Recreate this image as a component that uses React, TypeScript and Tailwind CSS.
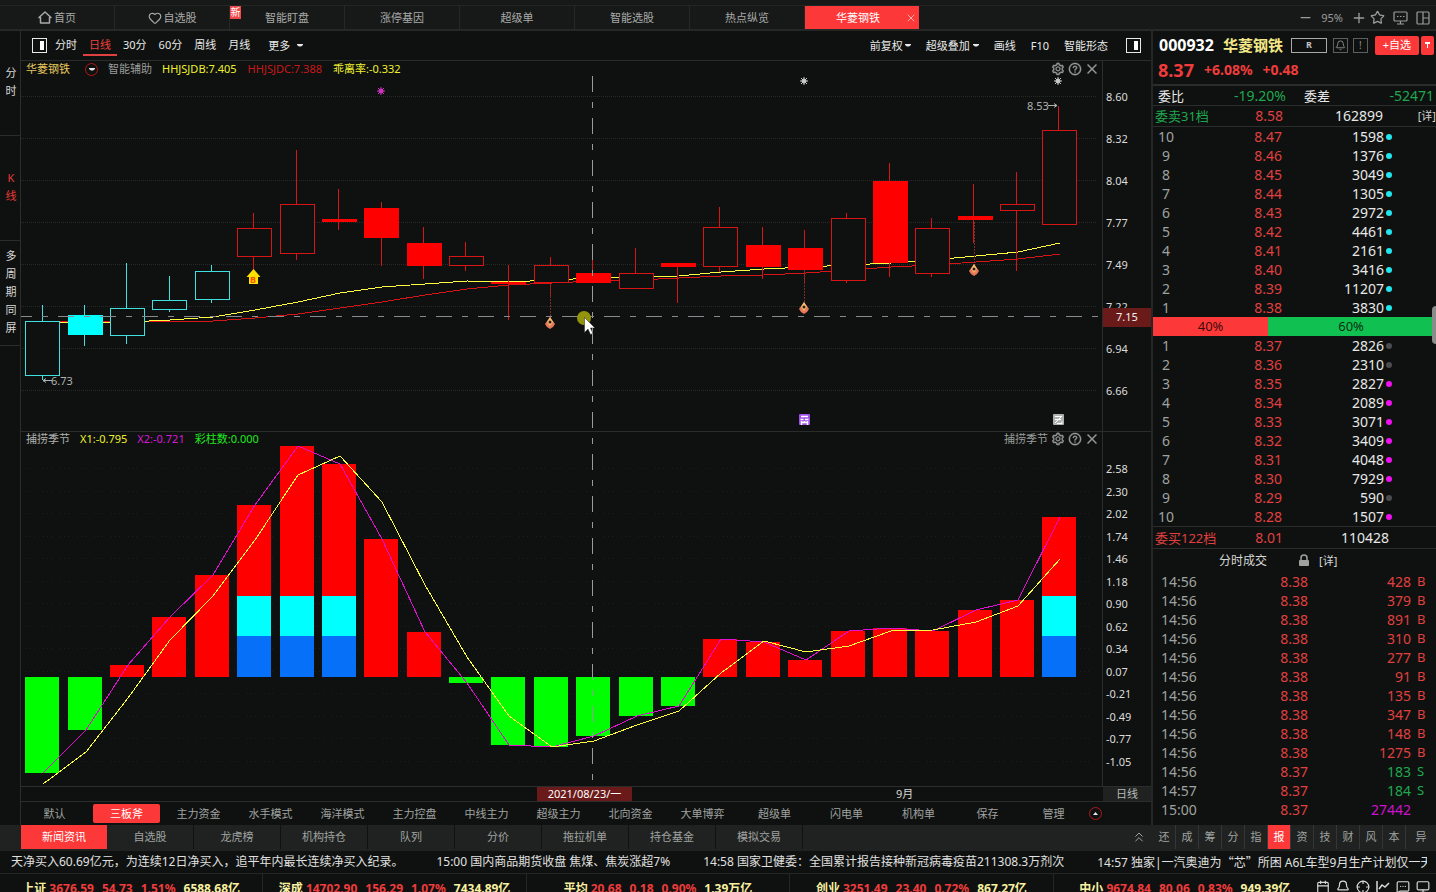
import { AiOutlineSetting, AiOutlineQuestionCircle, AiOutlineClose } from 'react-icons/ai';
import { Heart, Star, Minus, Plus, Bell, X, ChevronsUp, Calendar, Crosshair, MessageSquareMore, Monitor } from 'lucide-react';

const topTabs = ['首页', '自选股', '智能盯盘', '涨停基因', '超级单', '智能选股', '热点纵览'];
const periods = ['分时', '日线', '30分', '60分', '周线', '月线'];
const sideTabs = [
  { chars: ['分', '时'], style: 'pt-[33px] text-[#d8d8d8]' },
  { chars: ['K', '线'], style: 'pt-[33px] text-[#e83838]' },
  { chars: ['多', '周', '期', '同', '屏'], style: 'pt-[6px] text-[#d8d8d8]' },
];
const templates = ['默认', '三板斧', '主力资金', '水手模式', '海洋模式', '主力控盘', '中线主力', '超级主力', '北向资金', '大单博弈', '超级单', '闪电单', '机构单'];
const infoTabs = ['新闻资讯', '自选股', '龙虎榜', '机构持仓', '队列', '分价', '拖拉机单', '持仓基金', '模拟交易'];
const panelTabs = ['还', '成', '筹', '分', '指', '报', '资', '技', '财', '风', '本'];

const asks = [
  ['10', '8.47', '1598'], ['9', '8.46', '1376'], ['8', '8.45', '3049'], ['7', '8.44', '1305'], ['6', '8.43', '2972'],
  ['5', '8.42', '4461'], ['4', '8.41', '2161'], ['3', '8.40', '3416'], ['2', '8.39', '11207'], ['1', '8.38', '3830'],
].map(([level, price, volume]) => ({ level, price, volume, dot: 'bg-[#22e6ee]' }));

const PINK = 'bg-[#f010f0]';
const GREY = 'bg-[#4a4c50]';
const bids = [
  { level: '1', price: '8.37', volume: '2826', dot: GREY },
  { level: '2', price: '8.36', volume: '2310', dot: GREY },
  { level: '3', price: '8.35', volume: '2827', dot: PINK },
  { level: '4', price: '8.34', volume: '2089', dot: PINK },
  { level: '5', price: '8.33', volume: '3071', dot: PINK },
  { level: '6', price: '8.32', volume: '3409', dot: PINK },
  { level: '7', price: '8.31', volume: '4048', dot: PINK },
  { level: '8', price: '8.30', volume: '7929', dot: PINK },
  { level: '9', price: '8.29', volume: '590', dot: GREY },
  { level: '10', price: '8.28', volume: '1507', dot: PINK },
];

const trades = [
  ['14:56', '8.38', '428', 'B'], ['14:56', '8.38', '379', 'B'], ['14:56', '8.38', '891', 'B'], ['14:56', '8.38', '310', 'B'],
  ['14:56', '8.38', '277', 'B'], ['14:56', '8.38', '91', 'B'], ['14:56', '8.38', '135', 'B'], ['14:56', '8.38', '347', 'B'],
  ['14:56', '8.38', '148', 'B'], ['14:56', '8.38', '1275', 'B'], ['14:56', '8.37', '183', 'S'], ['14:57', '8.37', '184', 'S'],
  ['15:00', '8.37', '27442', ''],
];

const indices = [
  ['上证', '3676.59', '54.73', '1.51%', '6588.68亿'],
  ['深成', '14702.90', '156.29', '1.07%', '7434.89亿'],
  ['平均', '20.68', '0.18', '0.90%', '1.39万亿'],
  ['创业', '3251.49', '23.40', '0.72%', '867.27亿'],
  ['中小', '9674.84', '80.06', '0.83%', '949.39亿'],
];

// high, body top, body bottom, low, style (c = cyan hollow, C = cyan solid, r = red hollow, R = red solid)
const candles: [number, number, number, number, string][] = [
  [305, 321, 375, 380, 'c'], [305, 315, 335, 346, 'C'], [263, 308, 335, 344, 'c'], [276, 300, 309, 312, 'c'], [265, 271, 299, 303, 'c'],
  [213, 228, 256, 270, 'r'], [150, 204, 253, 260, 'r'], [189, 219, 222, 230, 'R'], [202, 208, 238, 266, 'R'], [227, 243, 266, 279, 'R'],
  [242, 256, 265, 271, 'r'], [265, 282, 284, 320, 'R'], [257, 265, 282, 297, 'r'], [260, 273, 283, 283, 'R'], [248, 273, 288, 288, 'r'],
  [263, 263, 267, 303, 'R'], [207, 227, 266, 272, 'r'], [227, 245, 267, 279, 'R'], [230, 248, 270, 282, 'R'], [213, 218, 280, 283, 'r'],
  [163, 181, 263, 277, 'R'], [218, 228, 273, 277, 'r'], [184, 216, 220, 243, 'R'], [172, 204, 210, 271, 'r'], [106, 130, 224, 224, 'r'],
];
const fastMa = [322, 322, 322, 320, 317, 310, 302, 293, 287, 284, 281, 282, 280, 278, 277, 276, 272, 269, 267, 265, 263, 260, 256, 252, 243];
const slowMa = [321, 321, 321, 321, 321, 318, 314, 308, 302, 295, 289, 285, 283, 281, 280, 278, 276, 275, 273, 270, 267, 265, 262, 259, 254];
const bars = [773, 730, 665, 617, 575, 505, 446, 464, 539, 632, 683, 745, 747, 736, 716, 706, 639, 642, 660, 631, 628, 631, 610, 600, 517];
const x1 = [784, 752, 698, 640, 596, 540, 475, 456, 502, 585, 657, 716, 747, 741, 725, 711, 673, 641, 652, 646, 631, 630, 622, 606, 559];
const ZERO = 677;

const priceTicks: [string, number][] = [['8.60', 97], ['8.32', 139], ['8.04', 181], ['7.77', 223], ['7.49', 265], ['7.22', 307], ['6.94', 349], ['6.66', 391]];
const seasonTicks: [string, number][] = [
  ['2.58', 469], ['2.30', 492], ['2.02', 514], ['1.74', 537], ['1.46', 559], ['1.18', 582], ['0.90', 604],
  ['0.62', 627], ['0.34', 649], ['0.07', 672], ['-0.21', 694], ['-0.49', 717], ['-0.77', 739], ['-1.05', 762],
];

const wickX = (i: number) => Math.floor(42.2 + 42.35 * i);
const bodyX = (i: number) => Math.round(25.3 + 42.38 * i);
const toPoints = (ys: number[]) => ys.map((y, i) => `${bodyX(i) + 18},${y}`).join(' ');

function Caret() {
  return <svg width="6" height="3" viewBox="0 0 6 3" fill="currentColor"><path d="M0 0h6v1L4 2.500h-2L0 1z" /></svg>;
}

function SplitIcon() {
  return (
    <svg width="15" height="15" viewBox="0 0 15 15" fill="none">
      <rect x=".5" y=".5" width="14" height="14" stroke="#e8e8e8" />
      <rect x="8" y="3" width="4" height="9" fill="#fff" />
    </svg>
  );
}

function Sun({ x, y, color }: { x: number; y: number; color: string }) {
  return (
    <g stroke={color} strokeWidth="1">
      <circle cx={x} cy={y} r="2" fill={color} />
      <path d={`M${x} ${y - 4}v8M${x - 4} ${y}h8M${x - 3} ${y - 3}l6 6M${x + 3} ${y - 3}l-6 6`} />
    </g>
  );
}

function Flame({ x, y, from }: { x: number; y: number; from: number }) {
  return (
    <g>
      <path d={`M${x + 0.5} ${from}V${y - 5}`} stroke="#7a2c28" strokeDasharray="2 1" />
      <path d={`M${x} ${y - 6}L${x + 5} ${y + 1}L${x + 3} ${y + 4}L${x} ${y + 6}L${x - 3} ${y + 4}L${x - 5} ${y + 1}Z`} fill="#e8785a" />
      <path d={`M${x} ${y - 6}L${x + 3} ${y - 1}L${x} ${y + 3}L${x - 3} ${y - 1}Z`} fill="#f0c070" />
      <circle cx={x} cy={y - 1} r="1.5" fill="#3a1a10" />
    </g>
  );
}

function PaneTools({ label }: { label?: string }) {
  return (
    <div className="flex items-center gap-[3px] text-[#9a9c9a]">
      {label && <span>{label}</span>}
      <button aria-label="设置"><AiOutlineSetting size={14} strokeWidth={30} /></button>
      <button aria-label="帮助"><AiOutlineQuestionCircle size={14} strokeWidth={30} /></button>
      <button aria-label="关闭"><AiOutlineClose size={14} strokeWidth={30} /></button>
    </div>
  );
}

function Chart() {
  return (
    <div className="relative">
      <svg className="block h-[725px] w-full" viewBox="21 61 1130 725" fontSize="11" fill="none">
        {/* Grid and axis */}
        {priceTicks.map(([label, y]) => (
          <g key={label}>
            <path d={`M21 ${y - 0.5}H1097`} stroke="#272b28" strokeDasharray="1 1" />
            <text x="1106" y={y + 4} fill="#dcdcdc">{label}</text>
          </g>
        ))}
        {seasonTicks.map(([label, y]) => (
          <g key={label}>
            <path d={`M26 ${y - 0.5}H1097`} stroke="#1b1f1c" strokeDasharray="1 3 1 3 1 8" />
            <text x="1106" y={y + 4} fill="#dcdcdc">{label}</text>
          </g>
        ))}
        <path d="M1102.500 61V786M21 431.500H1151" stroke="#2a2d2b" />

        {/* Moving averages sit behind the candles */}
        <g shapeRendering="crispEdges">
          <polyline points={toPoints(slowMa)} stroke="#d81414" />
          <polyline points={toPoints(fastMa)} stroke="#ffff40" />
          {candles.map(([high, top, bottom, low, style], i) => {
            const solid = style === 'C' || style === 'R';
            const cyan = style === 'c' || style === 'C';
            const stroke = cyan ? '#40e0e0' : '#d81414';
            return (
              <g key={i}>
                <path d={`M${wickX(i) + 0.5} ${high}V${low}`} stroke={stroke} />
                {solid
                  ? <rect x={bodyX(i)} y={top} width="35" height={bottom - top} fill={cyan ? '#00ffff' : '#ff0000'} />
                  : <rect x={bodyX(i) + 0.5} y={top + 0.5} width="34" height={bottom - top} stroke={stroke} fill="#0e110f" />}
              </g>
            );
          })}
        </g>

        {/* Signals */}
        <Flame x={550} y={323} from={284} />
        <Flame x={804} y={308} from={270} />
        <Flame x={974} y={270} from={222} />
        <Sun x={381} y={91} color="#d030c0" />
        <Sun x={804} y={81} color="#c8c8c8" />
        <Sun x={1058} y={81} color="#c8c8c8" />
        <path d="M253.500 269L260.500 277H258V284H249V277H246.500Z" fill="#ffe000" />
        <text x="250" y="283" fontSize="9" fontWeight="700" fill="#ff5000">B</text>
        <path d="M43 380.500H52M46 378.500L43 380.500L46 382.500" stroke="#b0b0b0" />
        <text x="51" y="385" fill="#b0b0b0">6.73</text>
        <path d="M1048 105.500H1057M1054 103.500L1057 105.500L1054 107.500" stroke="#b0b0b0" />
        <text x="1027" y="110" fill="#b0b0b0">8.53</text>
        <rect x="799" y="414" width="11" height="11" rx="1" fill="#a050e8" />
        <path d="M801 416.500h7M800.500 419.500h3M805 419.500h3.500M801.500 421v4M804.500 421v2M807.500 421v4M801 422.500h7" stroke="#fff" strokeWidth="1.500" />
        <rect x="1053" y="414" width="11" height="11" rx="1" fill="#b0b2b0" />
        <path d="M1055 416.500h7M1055 419.500h6M1061 417l-6 6M1057 423.500h5v-2" stroke="#fff" />

        {/* Season histogram */}
        {bars.map((y, i) => (
          <rect key={i} x={bodyX(i)} y={Math.min(y, ZERO)} width="34" height={Math.abs(y - ZERO)} fill={y < ZERO ? '#ff0000' : '#00ff00'} />
        ))}
        {[5, 6, 7, 24].map((i) => (
          <g key={i}>
            <rect x={bodyX(i)} y="596" width="34" height="40" fill="#00ffff" />
            <rect x={bodyX(i)} y="636" width="34" height="41" fill="#0670f8" />
          </g>
        ))}
        <g shapeRendering="crispEdges">
          <polyline points={toPoints(bars)} stroke="#e010d0" />
          <polyline points={toPoints(x1)} stroke="#ffff40" />
        </g>

        {/* Crosshair */}
        <path d="M592.500 76V786" stroke="#989ca0" strokeDasharray="16 10 6 10" />
        <path d="M21 316.500H1099" stroke="#868a8e" strokeDasharray="16 10 6 10" strokeDashoffset="5" />
        <rect x="1103" y="308" width="48" height="19" fill="#6b1a1a" />
        <text x="1116" y="321" fill="#f0f0f0">7.15</text>
        <circle cx="584" cy="318" r="7" fill="#94940c" />
        <path d="M584.500 317.500V332.500L588 329L590.500 334.500L593 333.500L590.500 328H595Z" fill="#fff" stroke="#222" strokeWidth=".5" />
      </svg>

      <div className="absolute inset-x-0 top-0 flex h-4 items-center pr-[52px] pl-[5px]">
        <span className="text-[#e8c860]">华菱钢铁</span>
        <button aria-label="选择指标" className="mr-[10px] ml-[15px] flex size-[13px] items-center justify-center rounded-full border border-[#b01818] text-gray-200"><Caret /></button>
        <span className="mr-[10px] text-[#9a9c9a]">智能辅助</span>
        <span className="mr-[11px] text-[#f0f030]">HHJSJDB:7.405</span>
        <span className="mr-[11px] text-[#c81818]">HHJSJDC:7.388</span>
        <span className="text-[#f0f030]">乖离率:-0.332</span>
        <div className="ml-auto"><PaneTools /></div>
      </div>
      <div className="absolute inset-x-0 top-[370px] flex h-4 items-center gap-[10px] pr-[52px] pl-[5px]">
        <span className="text-[#b0b2b0]">捕捞季节</span>
        <span className="text-[#f0f030]">X1:-0.795</span>
        <span className="text-[#d818d8]">X2:-0.721</span>
        <span className="text-[#20e820]">彩柱数:0.000</span>
        <div className="ml-auto"><PaneTools label="捕捞季节" /></div>
      </div>
    </div>
  );
}

type Level = { level: string; price: string; volume: string; dot: string };

function DepthTable({ rows, label }: { rows: Level[]; label: string }) {
  return (
    <table aria-label={label} className="w-full table-fixed text-sm leading-[19px]">
      <tbody>
        {rows.map((r) => (
          <tr key={r.level}>
            <td className="w-[26px] p-0 text-center text-[#a0a2a0]">{r.level}</td>
            <td className="w-[103px] p-0 text-right text-[#e04040]">{r.price}</td>
            <td className="w-[102px] p-0 text-right text-[#e8e8e8]">{r.volume}</td>
            <td className="p-0 pl-0.5"><span className={`block size-1.5 rounded-full ${r.dot}`} /></td>
          </tr>
        ))}
      </tbody>
    </table>
  );
}

function QuotePanel() {
  return (
    <aside className="relative w-[285px] shrink-0 border-l-2 border-[#242725]">
      <div className="flex h-[28px] items-center pl-1.5">
        <span className="text-base font-bold text-white">000932</span>
        <h1 className="ml-[9px] text-[15px] font-bold text-[#f4e888]">华菱钢铁</h1>
        <span className="ml-2 flex h-[15px] w-9 items-center justify-center border border-[#a8aaa8] text-[9px] font-bold text-[#c0c2c0]">R</span>
        <button aria-label="预警" className="ml-[6px] flex size-[15px] items-center justify-center border border-[#5c5f5d] text-[#8c8f8d]"><Bell size={11} /></button>
        <button aria-label="提示" className="ml-[5px] flex size-[15px] items-center justify-center border border-[#5c5f5d] text-[10px] text-[#8c8f8d]">!</button>
        <button className="ml-[7px] h-[19px] w-11 rounded-xs bg-[#fc3838] text-[11px] text-white">+自选</button>
        <button aria-label="更多自选" className="ml-0.5 flex h-[19px] w-[13px] items-center justify-center rounded-xs bg-[#fc3838]">
          <svg width="5" height="6" viewBox="0 0 5 6" fill="#fff"><path d="M0 0h5v2H3v4H2V2H0z" /></svg>
        </button>
      </div>
      <div className="flex h-[27px] items-center gap-[10px] border-b-2 border-[#2a2d2b] pb-1 pl-[5px] font-bold text-[#f03c3c]">
        <span className="text-lg leading-4">8.37</span>
        <span className="text-sm leading-4">+6.08%</span>
        <span className="text-sm leading-4">+0.48</span>
      </div>
      <div className="flex h-5 items-center border-b border-[#2a2d2b] pr-0.5 pl-[5px]">
        <span className="text-[13px] text-[#e8e8e8]">委比</span>
        <span className="w-[102px] text-right text-sm text-[#20a850]">-19.20%</span>
        <span className="ml-[18px] text-[13px] text-[#e8e8e8]">委差</span>
        <span className="ml-auto text-sm text-[#20a850]">-52471</span>
      </div>
      <div className="flex h-[21px] items-center border-b border-[#2a2d2b] pl-0.5">
        <span className="w-[58px] text-[13px] text-[#20a850]">委卖31档</span>
        <span className="w-[70px] text-right text-sm text-[#e04040]">8.58</span>
        <span className="w-[100px] text-right text-sm text-[#e8e8e8]">162899</span>
        <a href="#asks" className="ml-auto text-[#d0d0d0]">[详]</a>
      </div>
      <DepthTable rows={asks} label="卖盘" />
      <div className="flex h-[19px] pr-0.5 text-[13px] leading-[19px] text-black/80">
        <div className="bg-[#fc3838] text-center" style={{ width: '41%' }}>40%</div>
        <div className="flex-1 bg-[#10c050] text-center">60%</div>
      </div>
      <DepthTable rows={bids} label="买盘" />
      <div className="flex h-[23px] items-center border-y border-[#2a2d2b] pl-0.5">
        <span className="w-[65px] text-[13px] text-[#e04040]">委买122档</span>
        <span className="w-[63px] text-right text-sm text-[#e04040]">8.01</span>
        <span className="w-[106px] text-right text-sm text-[#e8e8e8]">110428</span>
      </div>
      <div className="flex h-[23px] items-center pl-[66px] text-[#d8d8d8]">
        <h2 className="text-xs">分时成交</h2>
        <svg className="mr-[9px] ml-[31px]" width="12" height="13" viewBox="0 0 12 13" fill="none"><rect x="1" y="6" width="10" height="6" rx="1" fill="#a0a2a0" /><path d="M3 6V4a3 3 0 0 1 6 0v2" stroke="#a0a2a0" strokeWidth="1.500" /></svg>
        <a href="#trades">[详]</a>
      </div>
      <table aria-label="分时成交" className="w-full table-fixed text-sm leading-[19px]">
        <tbody>
          {trades.map(([time, price, volume, side], i) => {
            const color = side === 'B' ? 'text-[#e04040]' : side === 'S' ? 'text-[#20a850]' : 'text-[#d010d0]';
            return (
              <tr key={i}>
                <td className="w-[52px] p-0 pl-2 text-[#a0a2a0]">{time}</td>
                <td className="w-[103px] p-0 text-right text-[#e04040]">{price}</td>
                <td className={`w-[103px] p-0 text-right ${color}`}>{volume}</td>
                <td className={`p-0 pl-1.5 text-[13px] ${color}`}>{side}</td>
              </tr>
            );
          })}
        </tbody>
      </table>
      {/* Scroll thumb */}
      <div className="absolute top-[275px] right-0 h-[38px] w-1 rounded-l-sm bg-[#8a8c8a]" />
    </aside>
  );
}

export default function App() {
  return (
    <div lang="zh-CN" className="flex h-screen flex-col overflow-hidden bg-[#0e110f] font-['Noto_Sans','Noto_Sans_CJK_SC',sans-serif] text-[11px] leading-4 whitespace-nowrap text-[#d8d8d8]">
      {/* Top tabs */}
      <header className="flex h-[31px] shrink-0 border-b-2 border-[#252826] bg-[#171918] pt-[5px]">
        <nav className="flex flex-1 border-t border-[#222523]">
          {topTabs.map((tab, i) => (
            <button key={tab} className="relative flex w-[115px] items-center justify-center gap-0.5 border-r border-[#252826] text-[#a8aaa8]">
              {i === 0 && <svg width="14" height="13" viewBox="0 0 14 13" fill="none" stroke="currentColor" strokeWidth="1.500"><path d="M7 1L1 6.500H2.500V12H11.500V6.500H13Z" strokeLinejoin="round" /></svg>}
              {i === 1 && <Heart size={14} />}
              {tab}
              {i === 2 && <span className="absolute top-0 left-0 h-[13px] w-[11px] bg-[#f04848] text-[10px] leading-[13px] text-white">新</span>}
            </button>
          ))}
          <div className="relative flex w-[114px] items-center justify-center bg-[#fc3838] pr-2 text-white">
            <button>华菱钢铁</button>
            <button aria-label="关闭标签" className="absolute right-0.5 text-[#ffb0b0]"><X size={12} /></button>
          </div>
          <div className="ml-auto flex items-center pr-1.5 text-[#9a9c9a]">
            <button aria-label="缩小"><Minus size={15} /></button>
            <span className="mx-2">95%</span>
            <button aria-label="放大"><Plus size={16} /></button>
            <button aria-label="收藏" className="ml-[3px]"><Star size={15} /></button>
            <button aria-label="消息" className="ml-2">
              <svg width="15" height="14" viewBox="0 0 15 14" fill="none" stroke="currentColor" strokeWidth="1.200"><rect x="1" y="1" width="13" height="9" rx="1" /><path d="M7.500 10v3M4 13h7" /><path d="M4 5.500h1.500M7 5.500h1.500M10 5.500h1.500" /></svg>
            </button>
            <button aria-label="布局" className="ml-2">
              <svg width="14" height="14" viewBox="0 0 14 14" fill="none" stroke="currentColor" strokeWidth="1.200"><rect x="1" y="1" width="12" height="12" rx="1" /><path d="M7 1v12M7 7h6" /></svg>
            </button>
          </div>
        </nav>
      </header>

      <div className="flex shrink-0">
        <nav className="w-[21px] shrink-0 border-r border-[#2a2d2b]">
          {sideTabs.map(({ chars, style }) => (
            <button key={chars[0]} className={`flex min-h-[105px] w-full flex-col items-center border-b border-[#2a2d2b] pl-0.5 leading-[18px] ${style}`}>
              {chars.map((c) => <span key={c}>{c}</span>)}
            </button>
          ))}
        </nav>

        <main className="min-w-0 flex-1">
          <div className="flex h-[30px] items-center border-b border-[#2a2d2b] pr-[10px] pl-[11px] text-[#e8e8e8]">
            <button aria-label="左侧栏" className="mr-0.5"><SplitIcon /></button>
            <div className="flex h-5">
              {periods.map((p) => (
                <button key={p} className={`border-b-2 px-1.5 ${p === '日线' ? 'border-[#e04040] text-[#f04040]' : 'border-transparent'}`}>{p}</button>
              ))}
            </div>
            <button className="ml-3 flex items-center gap-[7px]">更多 <Caret /></button>
            <div className="ml-auto flex items-center gap-[15px]">
              <button className="flex items-center gap-0.5">前复权<Caret /></button>
              <button className="flex items-center gap-[3px]">超级叠加<Caret /></button>
              <button>画线</button>
              <button>F10</button>
              <button>智能形态</button>
              <button aria-label="右侧栏" className="ml-[3px]"><SplitIcon /></button>
            </div>
          </div>

          <Chart />

          <div className="flex h-4 border-y border-[#2a2d2b] leading-[14px]">
            <div className="relative flex-1">
              <span className="absolute left-[516px] w-[95px] bg-[#6b1a1a] text-center text-white">2021/08/23/一</span>
              <span className="absolute left-[875px]">9月</span>
            </div>
            <span className="w-12 bg-[#1f2220] text-center text-[#b8bab8]">日线</span>
          </div>

          <div className="flex h-[23px] items-center gap-[5px] text-[#a0a2a0]">
            {templates.map((t) => (
              <button key={t} className={`h-[19px] w-[67px] ${t === '三板斧' ? 'rounded-xs bg-[#fc3838] text-white' : ''}`}>{t}</button>
            ))}
            <button className="w-[61px]">保存</button>
            <button className="w-[61px]">管理</button>
            <button aria-label="展开" className="flex size-[13px] items-center justify-center rounded-full border border-[#b01818] text-gray-200">
              <svg width="5" height="3" viewBox="0 0 5 3" fill="currentColor"><path d="M0 3L2.500 0L5 3Z" /></svg>
            </button>
          </div>
        </main>

        <QuotePanel />
      </div>

      {/* Info tabs */}
      <nav className="flex h-[26px] shrink-0 border-b-2 border-[#1f2220] bg-[#1f2220] pl-[21px] text-[#a0a2a0]">
        {infoTabs.map((t) => (
          <button key={t} className={t === '新闻资讯' ? 'w-[86px] bg-[#fc3838] text-white' : 'w-[87px] border-r border-[#101210]'}>{t}</button>
        ))}
        <button aria-label="收起" className="mr-[6px] ml-auto"><ChevronsUp size={16} strokeWidth={1.5} /></button>
        {panelTabs.map((t) => (
          <button key={t} className={`w-[23px] border-r border-[#343735] ${t === '报' ? 'bg-[#fc3838] text-white' : ''}`}>{t}</button>
        ))}
        <button className="w-[30px]">异</button>
      </nav>

      {/* News ticker */}
      <div className="mr-[9px] flex h-[22px] shrink-0 items-center gap-[33px] overflow-hidden pl-[11px] text-xs text-[#e0e0e0]">
        <a href="#news1" className="shrink-0">天净买入60.69亿元，为连续12日净买入，追平年内最长连续净买入纪录。</a>
        <a href="#news2" className="shrink-0">15:00 国内商品期货收盘 焦煤、焦炭涨超7%</a>
        <a href="#news3" className="shrink-0">14:58 国家卫健委：全国累计报告接种新冠病毒疫苗211308.3万剂次</a>
        <a href="#news4" className="shrink-0">14:57 独家|一汽奥迪为<span className="font-['Noto_Sans_CJK_SC',sans-serif]">“芯”</span>所困 A6L车型9月生产计划仅一天</a>
      </div>

      {/* Market indices */}
      <footer className="flex h-[30px] shrink-0 border-t border-[#232624] text-xs font-bold">
        {indices.map(([name, value, change, pct, amount]) => (
          <div key={name} className="flex flex-1 items-center justify-center border-l border-[#232624] text-[#f03c3c] first:border-l-0">
            <span className="mr-[3px] text-[#f8f0a0]">{name}</span>
            <span className="mr-2">{value}</span>
            <span className="mr-2">{change}</span>
            <span className="mr-2">{pct}</span>
            <span className="text-[#f8f0a0]">{amount}</span>
          </div>
        ))}
        <div className="flex w-[120px] shrink-0 items-center gap-[6px] pb-1 text-[#d8dad8]">
          <Calendar size={14} />
          <Bell size={14} />
          <Crosshair size={14} />
          <svg width="14" height="14" viewBox="0 0 14 14" fill="none" stroke="currentColor" strokeWidth="1.500"><path d="M1 1v12h12M3 9l3-4 3 2 4-4" /></svg>
          <MessageSquareMore size={14} />
          <Monitor size={14} />
        </div>
      </footer>
    </div>
  );
}
